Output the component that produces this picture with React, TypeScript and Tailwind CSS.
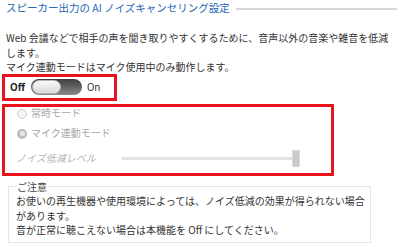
export default function App() {
  return (
    <div
      className="w-[400px] h-[247px] bg-white text-[#333] text-[10px] leading-[14.5px] overflow-hidden"
      style={{ fontFamily: '"Noto Sans CJK JP", "Noto Sans", sans-serif' }}
    >
      {/* Title */}
      <div className="flex items-center pl-[6px] pr-[3px] pt-[1px] h-[16px]">
        <span className="text-[#2666b4] text-[10.5px] whitespace-nowrap">スピーカー出力の AI ノイズキャンセリング設定</span>
        <div className="flex-1 ml-[6px] h-[2px] bg-[#d6d6d6]" />
      </div>

      {/* Description */}
      <div className="pl-[6px] mt-[15px] whitespace-nowrap">
        <p>
          Web 会議などで相手の声を聞き取りやすくするために、音声以外の音楽や雑音を低減
          <br />
          します。
        </p>
        <p>マイク連動モードはマイク使用中のみ動作します。</p>
      </div>

      {/* Toggle */}
      <div className="ml-[2px] mt-[-1px] w-[115px] h-[27px] border-[3px] border-[#e8131c] flex items-center pl-[5px]">
        <span className="font-bold text-[10px] text-[#222]">Off</span>
        <div className="ml-[6px] w-[51px] h-[16px] rounded-full bg-gradient-to-b from-[#3f3f3f] to-[#8a8a8a] p-[1px] flex">
          <div className="w-[29px] h-full rounded-full bg-gradient-to-b from-[#fafafa] to-[#d9d9d9] border border-[#b5b5b5]" />
        </div>
        <span className="ml-[5px] text-[10px] text-[#333]">On</span>
      </div>

      {/* Mode settings (disabled) */}
      <div className="ml-[2px] mt-[3px] w-[332px] h-[72px] border-[3px] border-[#e8131c] text-[#a8a8a8] pl-[12px]">
        <label className="flex items-center h-[14px]">
          <span className="w-[10px] h-[10px] rounded-full border border-[#cfcfcf] bg-[#f4f4f4]" />
          <span className="ml-[4px]">常時モード</span>
        </label>
        <label className="flex items-center h-[14px] mt-[6px]">
          <span className="w-[10px] h-[10px] rounded-full bg-[#bcbcbc] flex items-center justify-center">
            <span className="w-[5px] h-[5px] rounded-full bg-[#e9e9e9]" />
          </span>
          <span className="ml-[4px]">マイク連動モード</span>
        </label>
        <div className="flex items-center h-[18px] mt-[9px] -ml-[1px]">
          <span className="italic text-[#b4b4b4] w-[106px]">ノイズ低減レベル</span>
          <div className="flex items-center">
            <div className="w-[170px] h-[3px] bg-[#e2e2e2]" />
            <div className="w-[8px] h-[17px] bg-[#cacaca] border border-[#dcdcdc]" />
          </div>
        </div>
      </div>

      {/* Notice */}
      <fieldset className="ml-[8px] mt-[4px] w-[363px] border border-[#e4e4e4] pl-[7px] pb-[4px] leading-[14.5px]">
        <legend className="ml-[1px] px-0 text-[#444]">ご注意</legend>
        <p>お使いの再生機器や使用環境によっては、ノイズ低減の効果が得られない場合があります。</p>
        <p>音が正常に聴こえない場合は本機能を Off にしてください。</p>
      </fieldset>
    </div>
  );
}
